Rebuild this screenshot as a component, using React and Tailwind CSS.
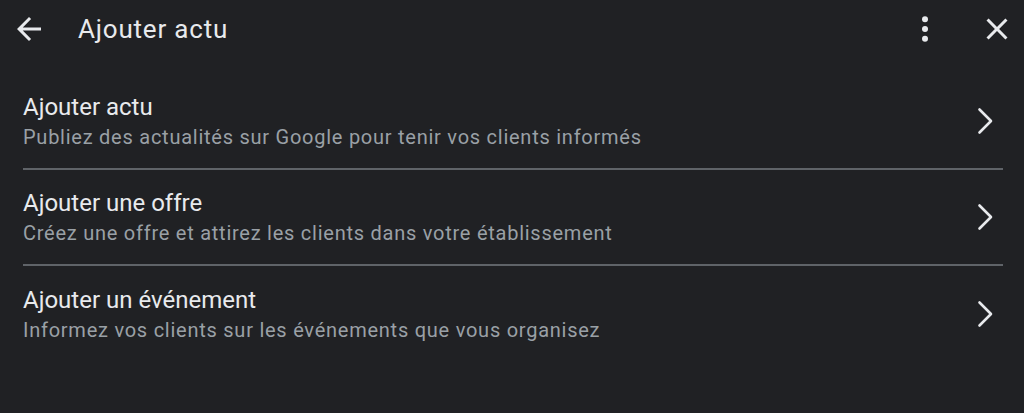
import React from 'react';

const items = [
  { title: 'Ajouter actu', desc: 'Publiez des actualités sur Google pour tenir vos clients informés' },
  { title: 'Ajouter une offre', desc: 'Créez une offre et attirez les clients dans votre établissement' },
  { title: 'Ajouter un événement', desc: 'Informez vos clients sur les événements que vous organisez' },
];

const Chevron = () => (
  <svg width="24" height="32" viewBox="0 0 24 32" fill="none" className="shrink-0 mr-[5px]">
    <polyline points="5.5,4.5 17,16 5.5,27.5" stroke="#e8eaed" strokeWidth="2.6" strokeLinecap="round" strokeLinejoin="round" />
  </svg>
);

export default function App() {
  return (
    <div className="w-[1024px] h-[413px] bg-[#202124] text-[#e8eaed] overflow-hidden font-['Roboto',sans-serif]">
      {/* top bar */}
      <header className="h-[58px] flex items-center pl-[11px] pr-[9px]">
        <svg width="36" height="36" viewBox="0 0 24 24" fill="#e8eaed" className="shrink-0">
          <path d="M20 11H7.83l5.59-5.59L12 4l-8 8 8 8 1.41-1.41L7.83 13H20v-2z" />
        </svg>
        <h1 className="ml-[31px] text-[26px] leading-[32px] tracking-[0.8px] flex-1">Ajouter actu</h1>
        <svg width="36" height="36" viewBox="0 0 24 24" fill="#e8eaed" className="shrink-0">
          <circle cx="12" cy="5.5" r="2" />
          <circle cx="12" cy="12" r="2" />
          <circle cx="12" cy="18.5" r="2" />
        </svg>
        <svg width="36" height="36" viewBox="0 0 24 24" fill="#e8eaed" className="shrink-0 ml-[36px]">
          <path d="M19 6.41L17.59 5 12 10.59 6.41 5 5 6.41 10.59 12 5 17.59 6.41 19 12 13.41 17.59 19 19 17.59 13.41 12z" />
        </svg>
      </header>

      <div className="mt-[16px] ml-[23px] mr-[21px]">
        {items.map((item, i) => (
          <div
            key={item.title}
            className={`h-[96px] flex items-center ${i < items.length - 1 ? 'border-b-2 border-[#5f6368]' : ''}`}
          >
            <div className="flex-1 pt-[2px]">
              <div className="text-[24px] leading-[30px] text-[#e8eaed]">{item.title}</div>
              <div className="text-[20px] leading-[30px] tracking-[0.75px] text-[#9aa0a6]">{item.desc}</div>
            </div>
            <Chevron />
          </div>
        ))}
      </div>
    </div>
  );
}
